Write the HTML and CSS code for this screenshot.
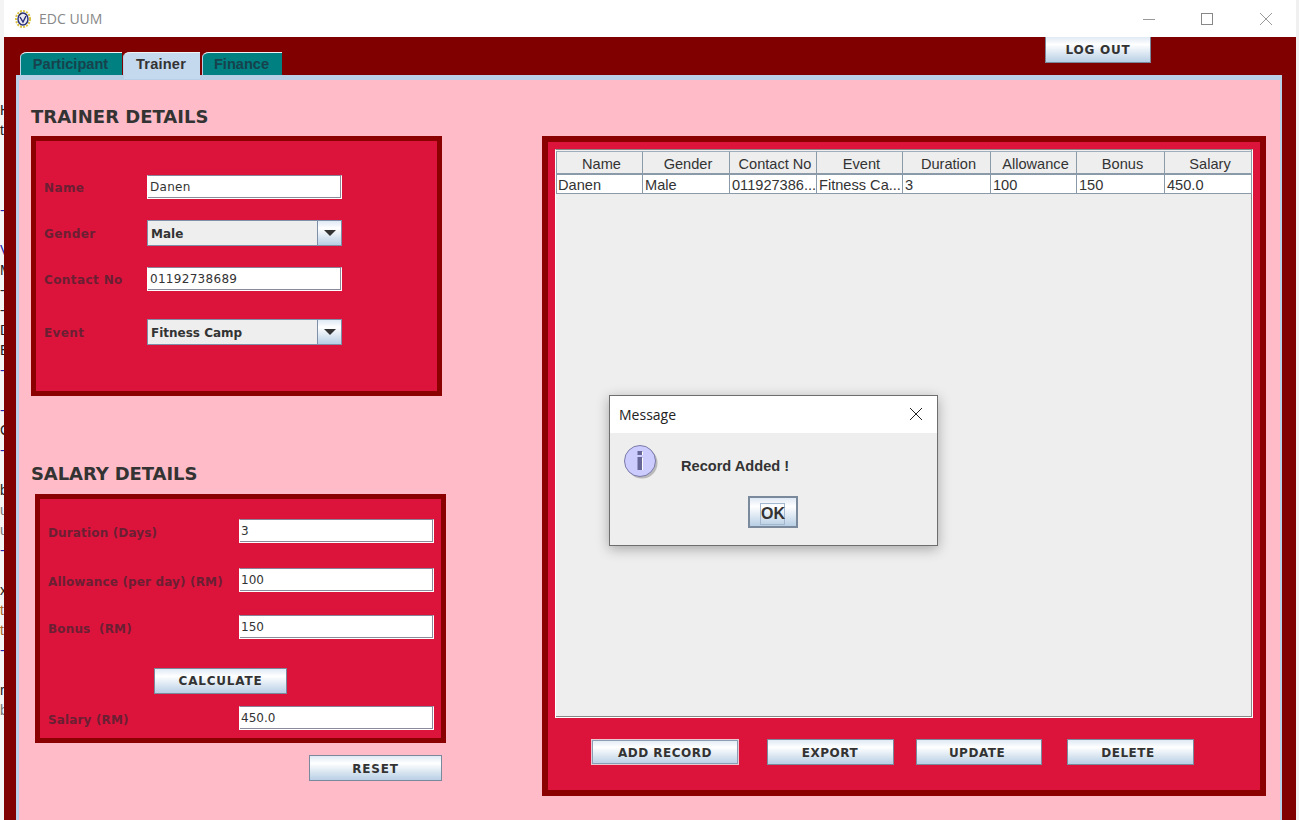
FILE: index.html
```html
<!DOCTYPE html>
<html lang="en">
<head>
    <meta charset="UTF-8">
    <title>EDC UUM</title>
    <link rel="stylesheet" href="styles.css">
</head>
<body>
    <div class="behind">
        <div>&nbsp;</div><div>&nbsp;</div><div>&nbsp;</div><div>&nbsp;</div>
        <div>&nbsp;</div>
        <div>H</div><div>t</div>
        <div>&nbsp;</div><div>&nbsp;</div><div>&nbsp;</div>
        <div class="link">-</div>
        <div>&nbsp;</div>
        <div class="link">V</div><div>M</div><div>-</div><div>-</div><div>D</div><div>E</div>
        <div class="link">-</div><div>&nbsp;</div><div class="link">-</div><div>C</div><div class="link">-</div>
        <div>&nbsp;</div>
        <div>b</div><div class="grey">u</div><div class="grey">u</div><div class="link">-</div>
        <div>&nbsp;</div>
        <div>x</div><div class="orange">t</div><div class="orange">t</div><div class="link">-</div>
        <div>&nbsp;</div>
        <div>r</div><div class="grey">b</div>
    </div>

    <div class="window">
        <div class="titlebar">
            <svg class="app-logo" width="18" height="20" viewBox="0 0 18 20">
                <ellipse cx="9" cy="10" rx="7" ry="8" fill="#fff" stroke="#d9c23c" stroke-width="2" stroke-dasharray="2 1.2"/>
                <ellipse cx="9" cy="10" rx="5" ry="6" fill="#e8e8f0" stroke="#2b2f7a" stroke-width="1.4"/>
                <path d="M6 8 L9 13 L12 7" fill="none" stroke="#2b2f7a" stroke-width="1.4"/>
                <path d="M5 6 L8 4" fill="none" stroke="#3a3a3a" stroke-width="1"/>
            </svg>
            <span class="app-title">EDC UUM</span>
            <svg class="win-controls" width="130" height="14" viewBox="0 0 130 14">
                <path d="M1 7.5 H13" stroke="#999" fill="none"/>
                <rect x="59.5" y="1.5" width="11" height="11" stroke="#888" fill="none"/>
                <path d="M118 1 L130 13 M130 1 L118 13" stroke="#999" fill="none"/>
            </svg>
        </div>

        <div class="frame">
            <div class="tabrow">
                <div class="tab tab-participant">Participant</div>
                <div class="tab tab-on">Trainer</div>
                <div class="tab tab-finance">Finance</div>
                <button class="btn btn-logout">LOG OUT</button>
            </div>

            <div class="tabpanel">
                <div class="leftcol">
                    <h2 class="heading">TRAINER DETAILS</h2>
                    <div class="box box-trainer">
                        <div class="row">
                            <label>Name</label>
                            <div class="field spaced">Danen</div>
                        </div>
                        <div class="row">
                            <label>Gender</label>
                            <div class="combo"><span>Male</span><i class="combo-btn"></i></div>
                        </div>
                        <div class="row row-wide">
                            <label>Contact No</label>
                            <div class="field spaced">01192738689</div>
                        </div>
                        <div class="row">
                            <label>Event</label>
                            <div class="combo"><span>Fitness Camp</span><i class="combo-btn"></i></div>
                        </div>
                    </div>

                    <h2 class="heading heading-salary">SALARY DETAILS</h2>
                    <div class="box box-salary">
                        <div class="row gap-25">
                            <label>Duration (Days)</label>
                            <div class="field">3</div>
                        </div>
                        <div class="row gap-23">
                            <label>Allowance (per day) (RM)</label>
                            <div class="field">100</div>
                        </div>
                        <div class="row gap-29">
                            <label>Bonus&nbsp; (RM)</label>
                            <div class="field">150</div>
                        </div>
                        <button class="btn btn-calc">CALCULATE</button>
                        <div class="row">
                            <label>Salary (RM)</label>
                            <div class="field">450.0</div>
                        </div>
                    </div>
                    <button class="btn btn-reset">RESET</button>
                </div>

                <div class="box box-table">
                    <div class="tablebox">
                        <div class="grid">
                            <div class="th">Name</div>
                            <div class="th">Gender</div>
                            <div class="th">Contact No</div>
                            <div class="th">Event</div>
                            <div class="th">Duration</div>
                            <div class="th">Allowance</div>
                            <div class="th">Bonus</div>
                            <div class="th">Salary</div>
                            <div class="td">Danen</div>
                            <div class="td">Male</div>
                            <div class="td">011927386...</div>
                            <div class="td">Fitness Ca...</div>
                            <div class="td">3</div>
                            <div class="td">100</div>
                            <div class="td">150</div>
                            <div class="td">450.0</div>
                        </div>
                    </div>
                    <div class="actions">
                        <button class="btn btn-add">ADD RECORD</button>
                        <button class="btn btn-export">EXPORT</button>
                        <button class="btn btn-update">UPDATE</button>
                        <button class="btn btn-delete">DELETE</button>
                    </div>
                </div>
            </div>
        </div>
    </div>
    <div class="behind-right"></div>

    <!-- message dialog -->
    <div class="dialog">
        <div class="dialog-title">
            <span>Message</span>
            <svg width="12" height="12" viewBox="0 0 12 12">
                <path d="M0 0 L12 12 M12 0 L0 12" stroke="#222" fill="none"/>
            </svg>
        </div>
        <div class="dialog-body">
            <div class="dialog-msg">
                <svg width="36" height="36" viewBox="0 0 36 36">
                    <circle cx="18" cy="18" r="15.5" fill="#b9b9b9"/>
                    <circle cx="16" cy="16" r="15.5" fill="#ccccff" stroke="#7a7aa8" stroke-width="1"/>
                    <rect x="13.5" y="6" width="5" height="4" fill="#666699"/>
                    <rect x="13.5" y="12" width="5" height="13" fill="#666699"/>
                    <path d="M18.5 6.5 V10 M18.5 12.5 V25" stroke="#fff"/>
                </svg>
                <span>Record Added !</span>
            </div>
            <button class="ok"><span>OK</span></button>
        </div>
    </div>
</body>
</html>
```

FILE: styles.css
```css
* {
    box-sizing: border-box;
}

body {
    margin: 0;
    height: 820px;
    display: flex;
    overflow: hidden;
    background: #f0f0f0;
    font-family: "DejaVu Sans", sans-serif;
    color: #333;
}

.behind {
    width: 4px;
    overflow: hidden;
    background: #f4f4f4;
    font: 14px/20px "Liberation Sans", sans-serif;
    color: #222;
}

.behind .link { color: #2222aa; }
.behind .grey { color: #777; }
.behind .orange { color: #a8642a; }

.behind-right {
    width: 3px;
    background: #f0f0f0;
}

.window {
    flex: 1;
    display: flex;
    flex-direction: column;
}

.titlebar {
    height: 37px;
    background: #fff;
    display: flex;
    align-items: center;
    padding-left: 10px;
}

.app-logo {
    flex: none;
}

.app-title {
    margin-left: 7px;
    font: 14px "Open Sans", sans-serif;
    color: #888;
}

.win-controls {
    margin-left: auto;
    margin-right: 24px;
}

.frame {
    flex: 1;
    background: #800000;
    padding-left: 12px;
    padding-right: 14px;
}

/* tabs */
.tabrow {
    height: 38px;
    display: flex;
    align-items: flex-end;
    padding-left: 4px;
}

.tab {
    height: 23px;
    margin-right: 1px;
    padding-right: 2px;
    background: #008080;
    border-top: 1px solid #eef3f8;
    border-left: 1px solid #b8cfe5;
    border-top-left-radius: 7px 5px;
    font: bold 14.6px/22px "Liberation Sans", sans-serif;
    color: #17424d;
    text-align: center;
}

.tab-participant { width: 102px; }
.tab-finance { width: 80px; margin-left: 1px; }

.tab-on {
    width: 77px;
    height: 27px;
    margin-bottom: -4px;
    position: relative;
    background: #c4d8ee;
    color: #333;
    letter-spacing: 0.2px;
}

/* buttons */
.btn {
    padding: 0;
    height: 26px;
    border: 1px solid #7a8a9c;
    background: linear-gradient(#dfe9f4 0%, #fff 30%, #b8cfe5 100%);
    font: bold 12px "DejaVu Sans", sans-serif;
    letter-spacing: 0.8px;
    color: #333;
}

.btn-logout {
    width: 106px;
    align-self: flex-start;
    margin-left: auto;
    margin-right: 131px;
    border-top: 0;
}

.btn-calc {
    display: block;
    width: 133px;
    margin: 0 0 12px 106px;
}

.btn-reset {
    width: 133px;
    margin-top: 12px;
    margin-right: 4px;
    align-self: flex-end;
    padding-top: 2px;
}

.tabpanel {
    height: 745px;
    display: flex;
    align-items: flex-start;
    background: #ffbcc8;
    border-top: 5px solid #b8cfe5;
    border-left: 3px solid #b8cfe5;
    border-right: 2px solid #b8cfe5;
    padding-left: 12px;
}

.leftcol {
    width: 415px;
    display: flex;
    flex-direction: column;
    padding-top: 26px;
}

.heading {
    margin: 0 0 8px;
    height: 22px;
    font-size: 18px;
    line-height: 22px;
    font-weight: bold;
    color: #333;
}

.heading-salary {
    margin-top: 67px;
    margin-bottom: 9px;
    letter-spacing: -0.1px;
}

/* red panels */
.box {
    background: #dc143c;
    border: 5px solid #8b0000;
}

.box-trainer {
    width: 411px;
    height: 260px;
    padding: 34px 0 0 8px;
}

.box-salary {
    width: 411px;
    height: 249px;
    margin-left: 4px;
    padding: 20px 0 0 8px;
}

.box-table {
    width: 724px;
    height: 660px;
    margin-top: 56px;
    margin-left: 96px;
    border-width: 6px;
    padding: 7px;
}

.row {
    display: flex;
    align-items: center;
    margin-bottom: 21px;
}

.row-wide { margin-bottom: 28px; }
.gap-25 { margin-bottom: 25px; }
.gap-23 { margin-bottom: 23px; }
.gap-29 { margin-bottom: 29px; }

.row label {
    width: 103px;
    padding-top: 2px;
    font-size: 12px;
    font-weight: bold;
    letter-spacing: 0.4px;
    color: #6b1f33;
}

.box-salary .row label {
    width: 191px;
    padding-top: 3px;
    letter-spacing: 0.15px;
}

.field {
    width: 195px;
    height: 24px;
    padding-left: 1px;
    background: #fff;
    border: 1px solid #fff;
    border-top-color: #8a8296;
    box-shadow: inset -1px -1px 0 #8a8a9a;
    font-size: 12px;
    line-height: 23px;
    color: #333;
}

.spaced {
    padding-left: 2px;
    letter-spacing: 0.3px;
}

.combo {
    width: 195px;
    height: 26px;
    display: flex;
    align-items: center;
    justify-content: space-between;
    padding-left: 3px;
    background: #eee;
    border: 1px solid #7f8fa8;
    font-size: 12px;
    font-weight: bold;
    color: #333;
}

.combo span {
    padding-top: 2px;
}

.combo-btn {
    width: 24px;
    height: 24px;
    display: flex;
    align-items: center;
    justify-content: center;
    border-left: 1px solid #7f8fa8;
    background: linear-gradient(#dfe9f4 0%, #fff 30%, #b8cfe5 100%);
}

.combo-btn::after {
    content: "";
    border-left: 6px solid transparent;
    border-right: 6px solid transparent;
    border-top: 6px solid #333;
}

/* table */
.tablebox {
    height: 569px;
    padding: 1px 2px 0 0;
    background: #eee;
    border: 1px solid #fff;
    border-top-color: #888;
    box-shadow: inset -1px -1px 0 #888;
}

.grid {
    display: grid;
    grid-template-columns: 87px 87px 87px 86px 88px 86px 88px 87px;
    font: 14.6px "Liberation Sans", sans-serif;
    color: #333;
}

.th {
    height: 24px;
    padding-left: 4px;
    line-height: 24px;
    text-align: center;
    background: #eee;
    border-right: 1px solid #8a9aa8;
    border-bottom: 2px solid #8a9aa8;
    border-top: 1px solid #a0aebb;
}

.th:first-child, .td:nth-child(9) {
    border-left: 1px solid #8a9aa8;
}

.td {
    height: 19px;
    line-height: 20px;
    padding-left: 2px;
    background: #fff;
    border-right: 1px solid #8a9aa8;
    border-bottom: 1px solid #8a9aa8;
    white-space: nowrap;
}

.td:nth-child(9) {
    padding-left: 1px;
}

.actions {
    display: flex;
    margin-top: 21px;
    padding-left: 36px;
}

.actions .btn {
    padding-top: 2px;
    letter-spacing: 0.5px;
}

.actions .btn-add {
    width: 148px;
    border-color: #e9c9d2;
    box-shadow: inset 0 0 0 1px #8a9db3;
}

.actions .btn-export { width: 127px; margin-left: 28px; padding-right: 1px; }
.actions .btn-update { width: 126px; margin-left: 22px; padding-right: 4px; }
.actions .btn-delete { width: 127px; margin-left: 25px; padding-right: 5px; }

/* dialog over the window */
.dialog {
    position: absolute;
    left: 609px;
    top: 395px;
    width: 329px;
    height: 151px;
    background: #eee;
    border: 1px solid #6e6e6e;
    box-shadow: 0 3px 12px rgba(0, 0, 0, 0.3);
}

.dialog-title {
    height: 37px;
    background: #fff;
    display: flex;
    align-items: center;
    justify-content: space-between;
    padding: 0 15px 1px 9px;
    font: 14px "Open Sans", sans-serif;
    color: #222;
}

.dialog-body {
    display: flex;
    flex-direction: column;
    align-items: center;
}

.dialog-msg {
    width: 100%;
    height: 63px;
    display: flex;
    align-items: center;
    padding: 0 0 3px 14px;
    font: bold 14.6px "Liberation Sans", sans-serif;
    color: #333;
}

.dialog-msg span {
    margin-left: 21px;
    padding-top: 6px;
}

.ok {
    width: 50px;
    height: 32px;
    padding: 3px 0 0;
    margin-right: 2px;
    border: 2px solid #7a8a9c;
    background: linear-gradient(#dfe9f4 0%, #fff 30%, #b8cfe5 100%);
    font: bold 16px "Liberation Sans", sans-serif;
    color: #333;
}

.ok span {
    display: inline-block;
    width: 25px;
    line-height: 20px;
    border: 1px solid #a3b8cc;
}
```
